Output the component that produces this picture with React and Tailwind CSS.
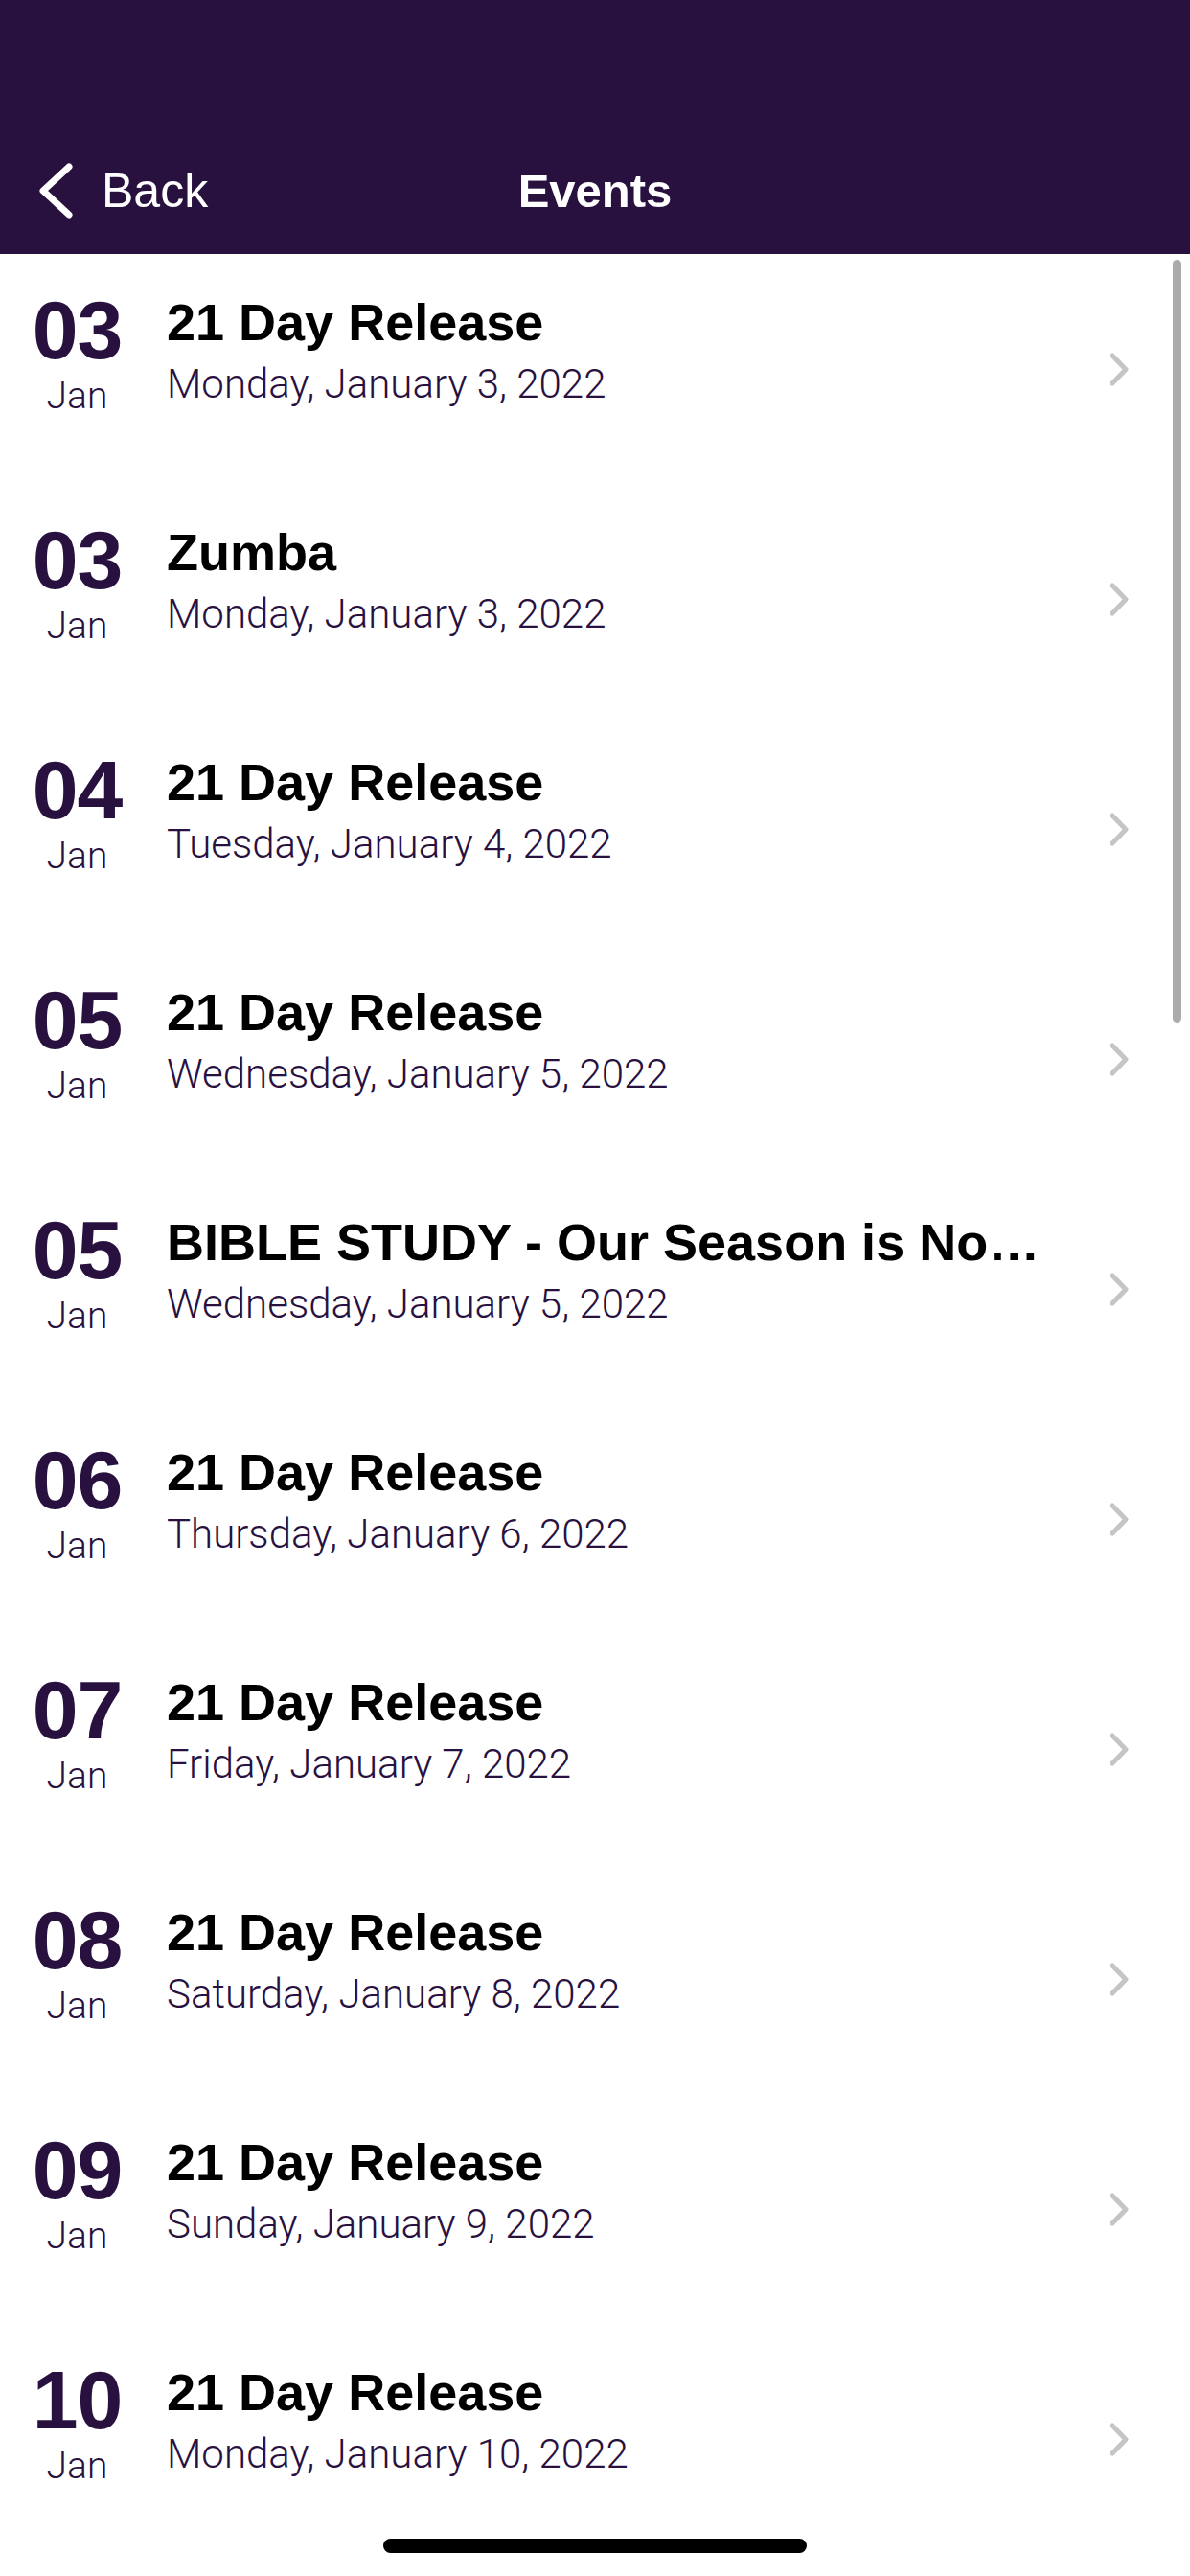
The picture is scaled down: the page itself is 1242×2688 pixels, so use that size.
import React from 'react';

const events = [
  { day: '03', title: '21 Day Release', date: 'Monday, January 3, 2022' },
  { day: '03', title: 'Zumba', date: 'Monday, January 3, 2022' },
  { day: '04', title: '21 Day Release', date: 'Tuesday, January 4, 2022' },
  { day: '05', title: '21 Day Release', date: 'Wednesday, January 5, 2022' },
  { day: '05', title: 'BIBLE STUDY - Our Season is Now Open', date: 'Wednesday, January 5, 2022' },
  { day: '06', title: '21 Day Release', date: 'Thursday, January 6, 2022' },
  { day: '07', title: '21 Day Release', date: 'Friday, January 7, 2022' },
  { day: '08', title: '21 Day Release', date: 'Saturday, January 8, 2022' },
  { day: '09', title: '21 Day Release', date: 'Sunday, January 9, 2022' },
  { day: '10', title: '21 Day Release', date: 'Monday, January 10, 2022' },
];

const sans = "font-['Liberation_Sans',Arial,sans-serif]";
const light = "font-['Roboto','Liberation_Sans',sans-serif] font-light";

const EventRow = ({ day, title, date }) => (
  <div className="flex h-[240px] items-start">
    <div className="flex w-[161px] shrink-0 flex-col items-center pt-[36px] text-[#28113f]">
      <span className={`${sans} text-[86px] font-bold leading-none tracking-[-1px]`}>{day}</span>
      <span className={`${light} mt-[7px] text-[39px] leading-none`}>Jan</span>
    </div>
    <div className="ml-[13px] mr-[60px] flex min-w-0 flex-1 flex-col pt-[39px]">
      <span className={`${sans} truncate text-[54px] font-bold leading-[1.2] text-black`}>{title}</span>
      <span className={`${light} mt-[11px] text-[42px] leading-none text-[#28113f]`}>{date}</span>
    </div>
    <div className="mr-[64px] flex h-full items-center">
      <svg width="20" height="35" viewBox="0 0 20 35" fill="none">
        <path d="M3 3 L17 17.5 L3 32" stroke="#c5c5c8" strokeWidth="5" strokeLinecap="round" strokeLinejoin="round" />
      </svg>
    </div>
  </div>
);

export default function App() {
  return (
    <div className="relative h-[2688px] w-[1242px] overflow-hidden bg-white">
      <header className="flex h-[265px] flex-col justify-end bg-[#28113e]">
        <div className="grid h-[132px] grid-cols-[1fr_auto_1fr] items-center">
          <button className="flex items-center pl-[40px] text-white">
            <svg width="36" height="58" viewBox="0 0 36 58" fill="none">
              <path d="M32 4 L5 29 L32 54" stroke="white" strokeWidth="7" strokeLinecap="round" strokeLinejoin="round" />
            </svg>
            <span className={`${sans} ml-[30px] text-[50px] leading-none`}>Back</span>
          </button>
          <h1 className={`${sans} text-[49px] font-bold leading-none text-white`}>Events</h1>
          <div />
        </div>
      </header>

      <div className="flex flex-col">
        {events.map((e, i) => (
          <EventRow key={i} {...e} />
        ))}
      </div>

      {/* scroll indicator */}
      <div className="absolute right-[9px] top-[271px] h-[796px] w-[9px] rounded-full bg-[#ababab]" />
      {/* home indicator */}
      <div className="absolute left-[400px] top-[2649px] h-[15px] w-[442px] rounded-full bg-black" />
    </div>
  );
}
